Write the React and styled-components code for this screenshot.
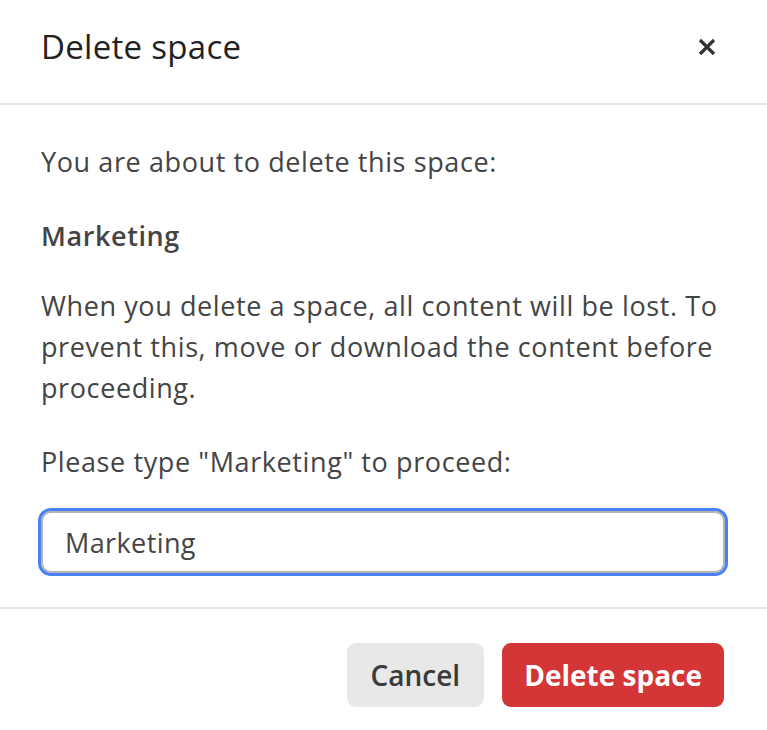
import React, { useState } from 'react';
import styled, { createGlobalStyle } from 'styled-components';

const GlobalStyle = createGlobalStyle`
  html, body {
    margin: 0;
    padding: 0;
    background: #ffffff;
  }
  body {
    font-family: "Open Sans", "Noto Sans", sans-serif;
  }
`;

const Dialog = styled.div`
  width: 767px;
  height: 730px;
  background: #ffffff;
  display: flex;
  flex-direction: column;
  overflow: hidden;
`;

const Header = styled.div`
  height: 105px;
  box-sizing: border-box;
  padding: 0 48px 10px 41px;
  display: flex;
  flex-direction: row;
  align-items: center;
  justify-content: space-between;
  border-bottom: 2px solid #e6e6e6;
`;

const Title = styled.h2`
  margin: 0;
  font-size: 33px;
  font-weight: 500;
  color: #222222;
  letter-spacing: 0.3px;
`;

const CloseButton = styled.button`
  width: 24px;
  height: 24px;
  border: none;
  background: transparent;
  padding: 0;
  display: flex;
  align-items: center;
  justify-content: center;
  cursor: pointer;
`;

const Body = styled.div`
  padding: 36px 42px 34px 41px;
  border-bottom: 2px solid #e6e6e6;
`;

const Text = styled.p`
  margin: 0 0 ${ props => props.gap ?? 33 }px 0;
  font-size: 27px;
  line-height: 41px;
  letter-spacing: 0.6px;
  font-weight: ${ props => props.strong ? 600 : 400 };
  color: #444444;
`;

const Input = styled.input`
  display: block;
  width: 100%;
  box-sizing: border-box;
  height: 62px;
  margin-top: 29px;
  padding: 0 22px;
  border: 2px solid #b5b5b5;
  border-radius: 10px;
  outline: 3px solid #4a80f5;
  outline-offset: 0;
  font-family: "Open Sans", "Noto Sans", sans-serif;
  font-size: 27px;
  letter-spacing: 0.4px;
  color: #444444;
  background: #ffffff;
`;

const Footer = styled.div`
  padding: 34px 43px 0 0;
  display: flex;
  flex-direction: row;
  justify-content: flex-end;
  gap: 18px;
`;

const Button = styled.button`
  height: 64px;
  padding: 0 ${ props => props.danger ? 22 : 24 }px;
  border: none;
  border-radius: 9px;
  font-family: "Open Sans", "Noto Sans", sans-serif;
  font-size: 28px;
  font-weight: ${ props => props.danger ? 700 : 600 };
  background: ${ props => props.danger ? '#d43536' : '#e8e8e8' };
  color: ${ props => props.danger ? '#ffffff' : '#3a3a3a' };
  cursor: pointer;
`;

const App = () => {
  const [value, setValue] = useState('Marketing');

  return (
    <Dialog>
      <GlobalStyle />
      <Header>
        <Title>Delete space</Title>
        <CloseButton aria-label="Close">
          <svg width="18" height="18" viewBox="0 0 18 18">
            <path d="M2 2 L16 16 M16 2 L2 16" stroke="#333333" strokeWidth="3.2" strokeLinecap="butt" />
          </svg>
        </CloseButton>
      </Header>
      <Body>
        <Text>You are about to delete this space:</Text>
        <Text strong gap={29}>Marketing</Text>
        <Text>When you delete a space, all content will be lost. To prevent this, move or download the content before proceeding.</Text>
        <Text gap={0}>Please type "Marketing" to proceed:</Text>
        <Input value={value} onChange={e => setValue(e.target.value)} />
      </Body>
      <Footer>
        <Button>Cancel</Button>
        <Button danger>Delete space</Button>
      </Footer>
    </Dialog>
  );
};

export default App;
